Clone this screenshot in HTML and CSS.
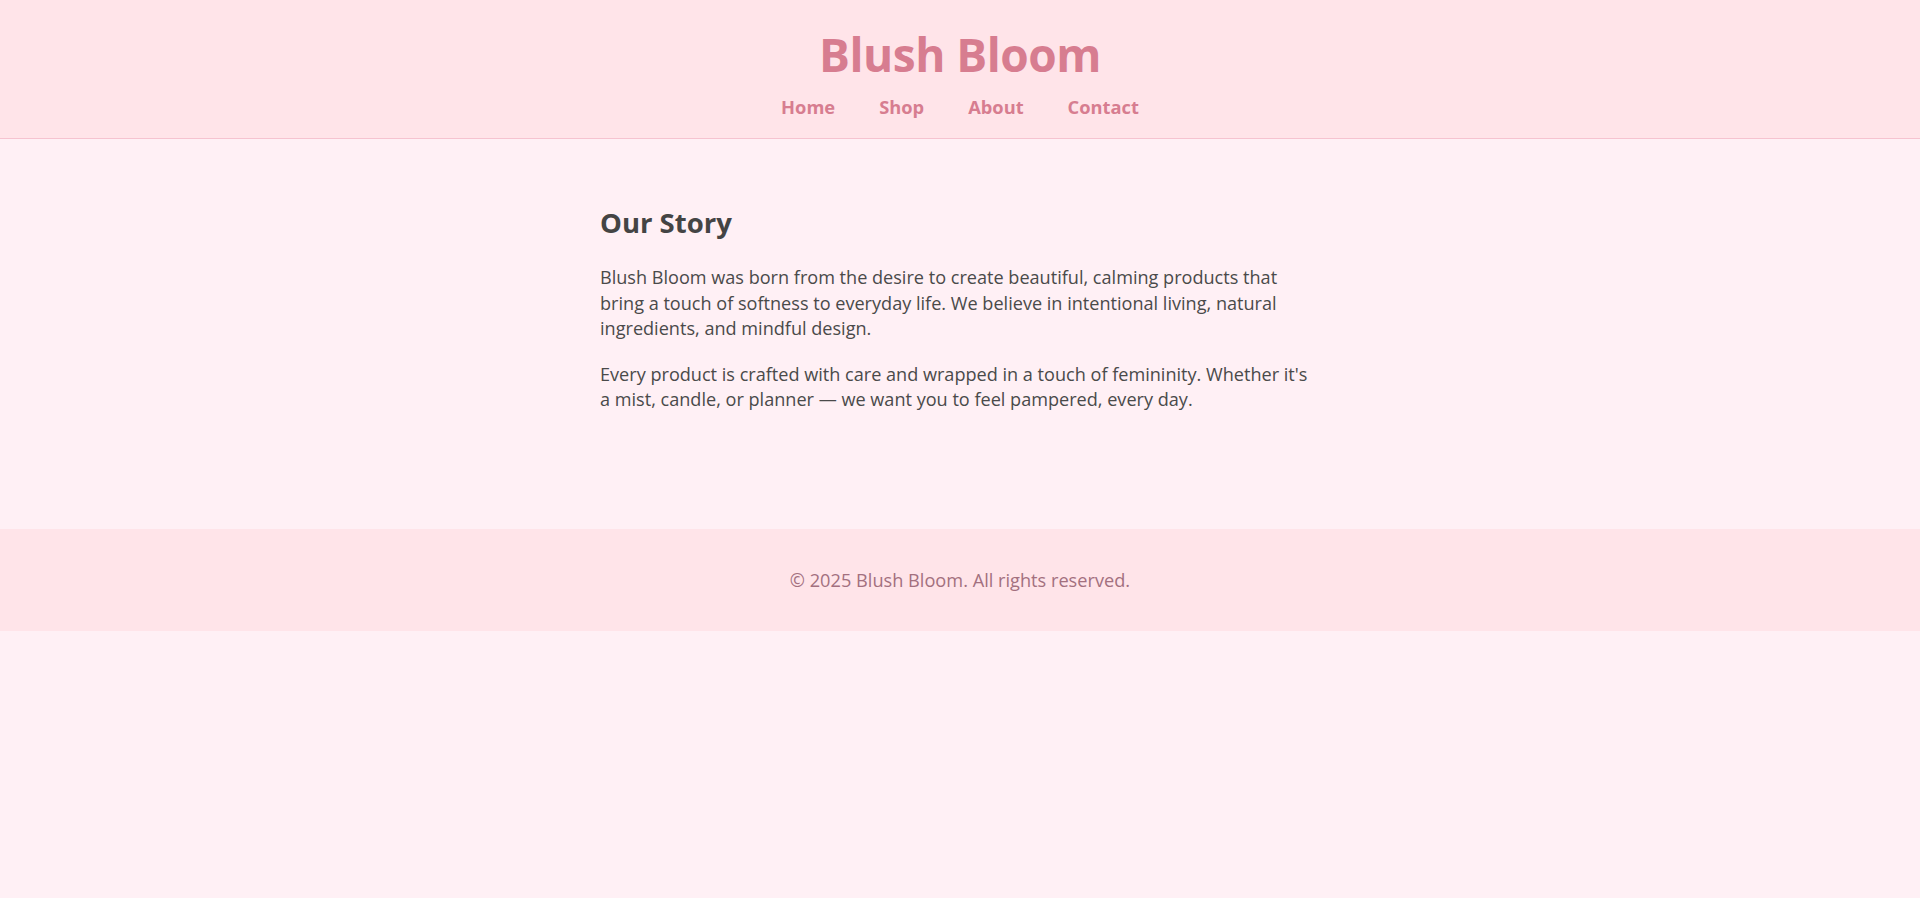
FILE: index.html
```html
<!DOCTYPE html>
<html lang="en">
<head>
<meta charset="utf-8">
<title>Blush Bloom — About</title>
<link rel="stylesheet" href="styles.css">
</head>
<body>
<header class="site-header">
  <h1 class="brand">Blush Bloom</h1>
  <nav class="nav">
    <a href="#" class="nav-link">Home</a>
    <a href="#" class="nav-link">Shop</a>
    <a href="#" class="nav-link">About</a>
    <a href="#" class="nav-link">Contact</a>
  </nav>
</header>
<main class="content">
  <section class="story">
    <h2 class="story-title">Our Story</h2>
    <p class="story-text">Blush Bloom was born from the desire to create beautiful, calming products that bring a touch of softness to everyday life. We believe in intentional living, natural ingredients, and mindful design.</p>
    <p class="story-text">Every product is crafted with care and wrapped in a touch of femininity. Whether it's a mist, candle, or planner — we want you to feel pampered, every day.</p>
  </section>
</main>
<footer class="site-footer">
  <p class="footer-text">© 2025 Blush Bloom. All rights reserved.</p>
</footer>
</body>
</html>
```
FILE: styles.css
```css
* { box-sizing: border-box; }
html, body { margin: 0; padding: 0; }
body {
  background: #fff0f5;
  font-family: "Open Sans", "Noto Sans", sans-serif;
  color: #444;
}
.site-header {
  background: #ffe4e9;
  border-bottom: 1px solid #f6c3d0;
  padding: 24px 0 19px;
  text-align: center;
}
.brand {
  margin: 0;
  font-size: 46px;
  line-height: 60px;
  font-weight: 700;
  color: #d77d90;
  letter-spacing: -0.5px;
}
.nav {
  display: flex;
  justify-content: center;
  gap: 44px;
  margin-top: 11px;
}
.nav-link {
  color: #d77d90;
  text-decoration: none;
  font-weight: 700;
  font-size: 18.3px;
  line-height: 24px;
}
.content {
  padding: 66px 0 116px;
}
.story {
  width: 720px;
  margin: 0 auto;
}
.story-title {
  margin: 0 0 24px;
  font-size: 27.5px;
  line-height: 36px;
  font-weight: 700;
  color: #444;
}
.story-text {
  margin: 0 0 19.5px;
  font-size: 18.1px;
  line-height: 25.7px;
  color: #4a4a4a;
}
.story-text:last-child { margin-bottom: 0; }
.site-footer {
  background: #ffe4e9;
  padding: 40px 0;
  text-align: center;
}
.footer-text {
  margin: 0;
  font-size: 18.2px;
  line-height: 22px;
  color: #a3707f;
}
```
